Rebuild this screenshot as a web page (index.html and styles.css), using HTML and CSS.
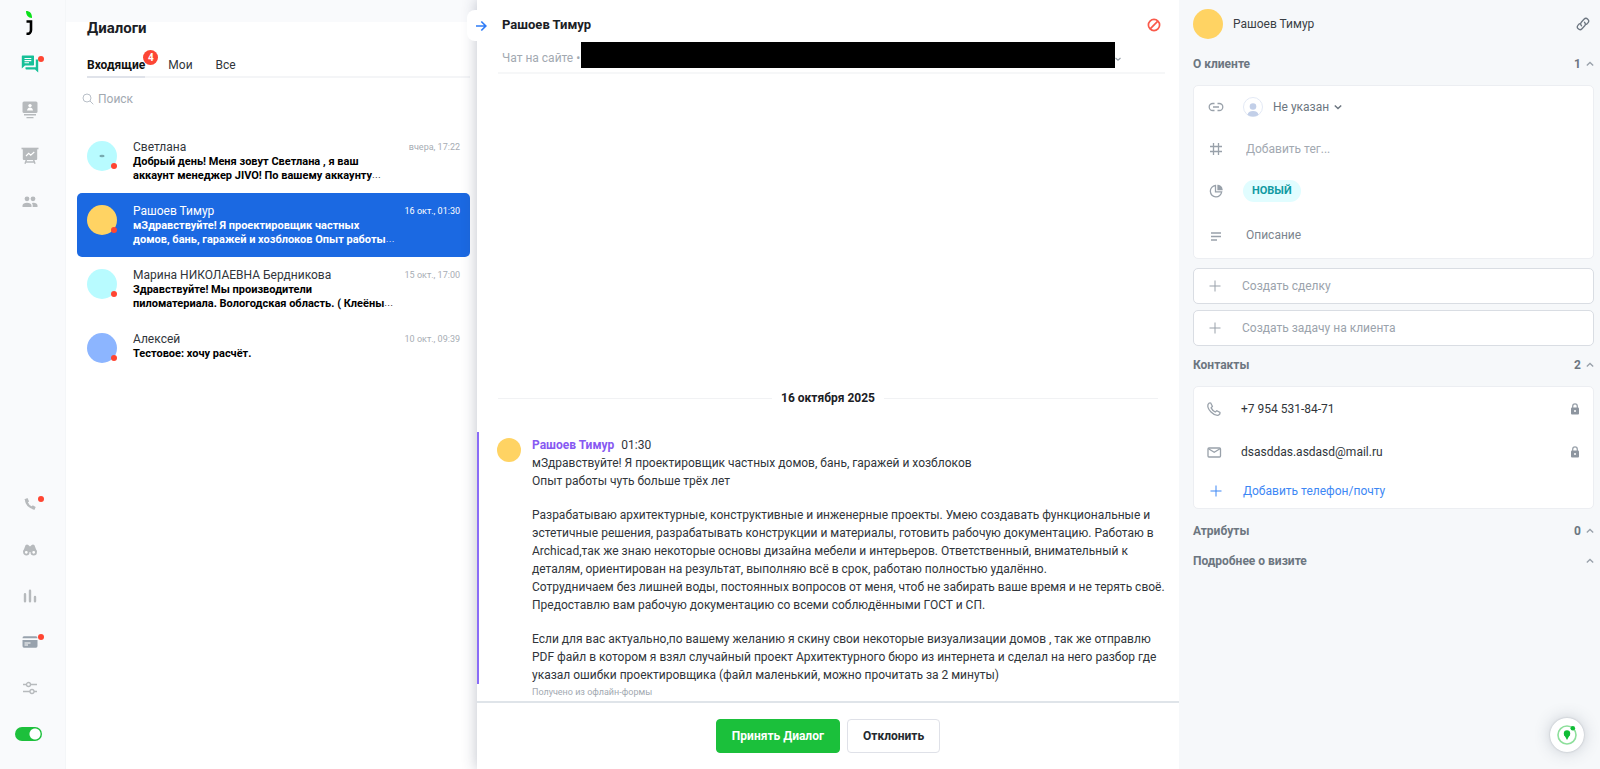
FILE: index.html
```html
<!DOCTYPE html>
<html lang="ru">
<head>
<meta charset="utf-8">
<title>Диалоги</title>
<link rel="stylesheet" href="styles.css">
</head>
<body>
<div class="app">
  <nav class="rail">
    <a class="logo" href="#" aria-label="Jivo"><svg width="12" height="26" viewBox="0 0 12 26"><path d="M2 1c4 0 6 2.500 6 7C4 8 2 5 2 1z" fill="#0be01a"/><path d="M2.500 11.500H7V20q0 4-4.500 3.800" fill="none" stroke="#000" stroke-width="2.600"/></svg></a>
    <div class="rail-group">
      <button class="rail-btn active" aria-label="Диалоги"><svg width="18" height="18" viewBox="0 0 18 18"><path fill="#16c098" d="M1.500.500h10.800q.700 0 .700.700v8.600q0 .700-.700.700H4L.800 13.500V1.200q0-.700.700-.700z"/><path d="M3.500 3.500h6.800M3.500 5.600h6.800M3.500 7.700h4.500" stroke="#fff" stroke-width="1.100"/><path fill="#16c098" d="M14.800 4.500h2.400V17.500L14 14.500H5.200q-.700 0-.700-.700v-1.600h10.300z"/></svg><i class="dot"></i></button>
      <button class="rail-btn" aria-label="Контакты"><svg width="16" height="18" viewBox="0 0 16 18"><rect x=".500" y=".500" width="15" height="11.500" rx="1.500" fill="currentColor"/><circle cx="8" cy="4.600" r="1.700" fill="#fff"/><path d="M5 9.500q.500-3 3-3t3 3z" fill="#fff"/><path d="M2 13.800h12M4.500 16.600h7" stroke="currentColor" stroke-width="1.400"/></svg></button>
      <button class="rail-btn" aria-label="Продажи"><svg width="18" height="18" viewBox="0 0 18 18"><path d="M.500 1.500h17" stroke="currentColor" stroke-width="1.600"/><rect x="1.800" y="1.500" width="14.400" height="11.500" rx="1" fill="currentColor"/><path d="M5 9l2.700-2.600 2 1.800L13.300 5" stroke="#fff" stroke-width="1.200" fill="none"/><path d="M5.500 12.500L4 16.800M12.500 12.500l1.500 4.300M5 15h8" stroke="currentColor" stroke-width="1.400"/></svg></button>
      <button class="rail-btn" aria-label="Команда"><svg width="16" height="12" viewBox="0 0 16 12" fill="currentColor"><circle cx="5" cy="2.800" r="2.400"/><circle cx="11" cy="2.800" r="2.400"/><path d="M.500 11V9.300q.500-2.600 4.500-2.600t4.500 2.600V11zM10.700 11V9.200q0-1.300-.900-2.300 5.200-.700 5.700 2.400V11z"/></svg></button>
    </div>
    <div class="rail-group">
      <button class="rail-btn" aria-label="Звонки"><svg width="14" height="14" viewBox="0 0 14 14"><path d="M3 2.500Q3.500 9.500 11.500 11.500" stroke="currentColor" stroke-width="2.400" fill="none"/><path d="M1.500 2.300L4.500 1l1.600 3.400-2.600 1.500zM8 10.500l1.700-2.300 3 1.700-1.200 2.900z" fill="currentColor"/></svg><i class="dot"></i></button>
      <button class="rail-btn" aria-label="Посетители"><svg width="14" height="12" viewBox="0 0 14 12"><path d="M2.500 1.200q1.300-1.200 2.800-.300L7 2.500 8.700.900q1.500-.900 2.800.300L14 8H0z" fill="currentColor"/><circle cx="3.300" cy="8.300" r="2.300" fill="#fff" stroke="currentColor" stroke-width="1.800"/><circle cx="10.700" cy="8.300" r="2.300" fill="#fff" stroke="currentColor" stroke-width="1.800"/></svg></button>
      <button class="rail-btn" aria-label="Отчёты"><svg width="14" height="14" viewBox="0 0 14 14"><path d="M2 5.200v7M7 1.700v10.500M12 8v4.200" stroke="currentColor" stroke-width="2.400" stroke-linecap="round"/></svg></button>
      <button class="rail-btn dark" aria-label="Оплата"><svg width="16" height="12" viewBox="0 0 16 12"><path d="M.500 2.300Q.500.300 2 .300h12q1.500 0 1.500 2zM.500 4h15v6q0 1.800-1.500 1.800H2Q.500 11.800.500 10z" fill="currentColor"/><path d="M2.500 7h6M2.500 9h3.500" stroke="#fff" stroke-width="1"/></svg><i class="dot"></i></button>
      <button class="rail-btn" aria-label="Настройки"><svg width="16" height="14" viewBox="0 0 16 14" fill="none" stroke="currentColor" stroke-width="1.300"><path d="M1 3.500h3.500M8.500 3.500H15M1 10.500h7M12 10.500h3"/><circle cx="6.500" cy="3.500" r="2"/><circle cx="10" cy="10.500" r="2"/></svg></button>
      <label class="toggle"><input type="checkbox" checked aria-label="В сети"></label>
    </div>
  </nav>

  <section class="inbox">
    <h1 class="inbox-title">Диалоги</h1>
    <div class="tabs">
      <button class="tab current">Входящие<span class="badge">4</span></button>
      <button class="tab">Мои</button>
      <button class="tab">Все</button>
    </div>
    <label class="search"><svg width="12" height="12" viewBox="0 0 12 12" fill="none" stroke="#b9c0c8" stroke-width="1"><circle cx="5" cy="5" r="4"/><path d="M8 8l3.300 3.300"/></svg><input type="text" placeholder="Поиск" aria-label="Поиск"></label>
    <ul class="dialogs">
      <li class="dialog"><span class="avatar cyan"><svg width="6" height="4" viewBox="0 0 6 4"><ellipse cx="3" cy="2" rx="2.600" ry="1.200" fill="#78aab0"/></svg><i class="dot"></i></span>
        <div class="dialog-body"><div class="dialog-head"><span>Светлана</span><time>вчера, 17:22</time></div><p>Добрый день! Меня зовут Светлана , я ваш<br>аккаунт менеджер JIVO! По вашему аккаунту<span class="more">…</span></p></div></li>
      <li class="dialog selected"><span class="avatar yellow"><i class="dot"></i></span>
        <div class="dialog-body"><div class="dialog-head"><span>Рашоев Тимур</span><time>16 окт., 01:30</time></div><p>мЗдравствуйте! Я проектировщик частных<br>домов, бань, гаражей и хозблоков Опыт работы<span class="more">…</span></p></div></li>
      <li class="dialog"><span class="avatar cyan"><i class="dot"></i></span>
        <div class="dialog-body"><div class="dialog-head"><span>Марина НИКОЛАЕВНА Бердникова</span><time>15 окт., 17:00</time></div><p>Здравствуйте! Мы производители<br>пиломатериала. Вологодская область. ( Клеёны<span class="more">…</span></p></div></li>
      <li class="dialog"><span class="avatar blue"><i class="dot"></i></span>
        <div class="dialog-body"><div class="dialog-head"><span>Алексей</span><time>10 окт., 09:39</time></div><p>Тестовое: хочу расчёт.</p></div></li>
    </ul>
  </section>

  <main class="chat">
    <button class="collapse" aria-label="Свернуть"><svg width="12" height="12" viewBox="0 0 12 12" fill="none" stroke="#2f7cf6" stroke-width="1.700"><path d="M1 6h9.500M6.300 1.500L10.800 6l-4.500 4.500"/></svg></button>
    <header class="chat-head">
      <div class="chat-top"><h2>Рашоев Тимур</h2><button class="icon-btn" aria-label="Заблокировать"><svg width="14" height="14" viewBox="0 0 14 14" fill="none" stroke="#fa5a4b" stroke-width="1.700"><circle cx="7" cy="7" r="5.600"/><path d="M3.200 10.800l7.600-7.600"/></svg></button></div>
      <div class="chat-source"><span>Чат на сайте •</span><span class="redacted"></span><svg width="6" height="6" viewBox="0 0 6 6" fill="none" stroke="#98a1ab" stroke-width="1.200"><path d="M.500 2L3 4.300 5.500 2"/></svg></div>
    </header>
    <div class="messages">
      <div class="date">16 октября 2025</div>
      <article class="message">
        <span class="avatar small yellow"></span>
        <div class="message-text">
          <div><b>Рашоев Тимур</b><time>01:30</time></div>
          <p>мЗдравствуйте! Я проектировщик частных домов, бань, гаражей и хозблоков<br>Опыт работы чуть больше трёх лет</p>
          <p>Разрабатываю архитектурные, конструктивные и инженерные проекты. Умею создавать функциональные и<br>эстетичные решения, разрабатывать конструкции и материалы, готовить рабочую документацию. Работаю в<br>Archicad,так же знаю некоторые основы дизайна мебели и интерьеров. Ответственный, внимательный к<br>деталям, ориентирован на результат, выполняю всё в срок, работаю полностью удалённо.<br>Сотрудничаем без лишней воды, постоянных вопросов от меня, чтоб не забирать ваше время и не терять своё.<br>Предоставлю вам рабочую документацию со всеми соблюдёнными ГОСТ и СП.</p>
          <p>Если для вас актуально,по вашему желанию я скину свои некоторые визуализации домов , так же отправлю<br>PDF файл в котором я взял случайный проект Архитектурного бюро из интернета и сделал на него разбор где<br>указал ошибки проектировщика (файл маленький, можно прочитать за 2 минуты)</p>
        </div>
      </article>
      <small class="origin">Получено из офлайн-формы</small>
    </div>
    <footer class="actions"><button class="btn accept">Принять Диалог</button><button class="btn">Отклонить</button></footer>
  </main>

  <aside class="details">
    <header class="client"><span class="avatar yellow"></span><span class="client-name">Рашоев Тимур</span><button class="icon-btn" aria-label="Ссылка"><svg width="14" height="14" viewBox="0 0 14 14" fill="none" stroke-linecap="round"><path d="M5.500 8.700a2.700 2.700 0 0 1 0-3.700L8 2.300a2.600 2.600 0 0 1 3.900 3.600L10.600 7.300M8.500 5.300a2.700 2.700 0 0 1 0 3.700L6 11.700a2.600 2.600 0 0 1-3.900-3.600L3.400 6.700"/></svg></button></header>
    <button class="section"><span>О клиенте</span><span>1</span><svg class="up" width="8" height="6" viewBox="0 0 8 6"><path d="M.800 4.500L4 1.500l3.200 3"/></svg></button>
    <div class="card info">
      <div class="row"><svg width="16" height="16" viewBox="0 0 16 16"><path d="M6.500 4.500H4.700a3.500 3.500 0 0 0 0 7h1.800M9.500 4.500h1.800a3.500 3.500 0 0 1 0 7H9.500M5 8h6"/></svg><button class="agent"><svg class="face" width="20" height="20" viewBox="0 0 20 20"><circle cx="10" cy="10" r="9.500" fill="#fff" stroke="#e3e9f5"/><circle cx="10" cy="9.500" r="3.300" fill="#c2cfe8"/><path d="M4.500 18q.500-4 5.500-4t5.500 4q-5.500 3-11 0z" fill="#c2cfe8"/></svg>Не указан<svg width="8" height="6" viewBox="0 0 8 6"><path d="M.800 1.500L4 4.500l3.200-3"/></svg></button></div>
      <label class="row"><svg width="16" height="16" viewBox="0 0 16 16"><path d="M5.500 2v12M10.500 2v12M2 5.500h12M2 10.500h12"/></svg><input class="field" type="text" placeholder="Добавить тег..." aria-label="Добавить тег"></label>
      <div class="row"><svg width="16" height="16" viewBox="0 0 16 16"><path d="M7.500 2.500a5.700 5.700 0 1 0 6.200 6.300H7.500z"/><path d="M10 2.500v4h4Q13.500 3 10 2.500z" fill="#99a1aa"/></svg><button class="status">НОВЫЙ</button></div>
      <label class="row tall"><svg width="16" height="16" viewBox="0 0 16 16"><path d="M3 6h10M3 9.500h10M3 13h6"/></svg><input class="field strong" type="text" placeholder="Описание" aria-label="Описание"></label>
    </div>
    <button class="create"><svg width="16" height="16" viewBox="0 0 16 16"><path d="M8 2.500v11M2.500 8h11"/></svg>Создать сделку</button>
    <button class="create"><svg width="16" height="16" viewBox="0 0 16 16"><path d="M8 2.500v11M2.500 8h11"/></svg>Создать задачу на клиента</button>
    <button class="section"><span>Контакты</span><span>2</span><svg class="up" width="8" height="6" viewBox="0 0 8 6"><path d="M.800 4.500L4 1.500l3.200 3"/></svg></button>
    <div class="card">
      <div class="row contact"><svg width="16" height="16" viewBox="0 0 16 16"><path d="M2 3.500Q3 1.500 4.700 2l1.700 3.300-1.300 1.600q1.300 2.600 4.100 4.100l1.600-1.300 3.200 1.700q.500 1.700-1.500 2.800Q9 15 5 11T2 3.500z"/></svg><span>+7 954 531-84-71</span><svg class="lock" width="10" height="12" viewBox="0 0 10 12"><path d="M2.700 5V3.200a2.300 2.300 0 0 1 4.600 0V5" fill="none"/><rect x="1" y="4.500" width="8" height="7" rx="1" fill="#8d959f" stroke="none"/><circle cx="5" cy="8" r="1" fill="#fff" stroke="none"/></svg></div>
      <div class="row contact"><svg width="16" height="16" viewBox="0 0 16 16"><rect x="2" y="4" width="12.500" height="9" rx="1"/><path d="M2.500 4.800l5.700 3.400 5.800-3.400"/></svg><span>dsasddas.asdasd@mail.ru</span><svg class="lock" width="10" height="12" viewBox="0 0 10 12"><path d="M2.700 5V3.200a2.300 2.300 0 0 1 4.600 0V5" fill="none"/><rect x="1" y="4.500" width="8" height="7" rx="1" fill="#8d959f" stroke="none"/><circle cx="5" cy="8" r="1" fill="#fff" stroke="none"/></svg></div>
      <button class="row add"><svg width="16" height="16" viewBox="0 0 16 16"><path d="M8 2.500v11M2.500 8h11"/></svg>Добавить телефон/почту</button>
    </div>
    <button class="section"><span>Атрибуты</span><span>0</span><svg class="up" width="8" height="6" viewBox="0 0 8 6"><path d="M.800 4.500L4 1.500l3.200 3"/></svg></button>
    <button class="section"><span>Подробнее о визите</span><svg class="up" width="8" height="6" viewBox="0 0 8 6"><path d="M.800 4.500L4 1.500l3.200 3"/></svg></button>
  </aside>
  <button class="help" aria-label="Помощь"><svg width="22" height="22" viewBox="0 0 22 22"><circle cx="11" cy="11" r="9" fill="none" stroke="#8ddf9b" stroke-width="1.600"/><circle cx="11" cy="9.500" r="3.200" fill="#0fbc35"/><path d="M8.300 11h5.400L11 16z" fill="#0fbc35"/><circle cx="16.800" cy="4.300" r="2.300" fill="#0fbc35"/></svg></button>
</div>
</body>
</html>
```
FILE: styles.css
```css
* { box-sizing: border-box; }
body { margin: 0; font: 12px/18px Roboto, "Liberation Sans", sans-serif; color: #30353a; background: #fff; }
button, input { font: inherit; color: inherit; background: none; border: 0; padding: 0; margin: 0; text-align: left; }
button { cursor: pointer; }
h1, h2, p, ul { margin: 0; padding: 0; }
svg { flex: none; display: block; }
.app { display: grid; grid-template-columns: 66px 411px minmax(0, 1fr) 421px; height: 100vh; }

.rail { background: #f9fafc; border-right: 1px solid #f4f6f8; display: flex; flex-direction: column; align-items: flex-start; padding: 10px 0 12px 7px; }
.logo { width: 46px; display: flex; justify-content: center; }
.rail-group { display: flex; flex-direction: column; color: #b7babd; padding-top: 5px; }
.rail-group + .rail-group { margin-top: auto; }
.rail-btn { position: relative; width: 46px; height: 46px; display: flex; align-items: center; justify-content: center; }
.dark { color: #98a2ad; }
.dot { position: absolute; width: 6px; height: 6px; border-radius: 50%; background: #ff4532; right: 9px; top: 15px; }
.toggle { height: 46px; display: flex; align-items: center; padding-left: 8px; }
.toggle input { appearance: none; width: 27px; height: 14px; border-radius: 7px; background: radial-gradient(circle at 20px 7px, #fff 5px, #1dc03c 6px); }

.inbox { background: linear-gradient(#f9fafc 22px, #fff 22px); padding: 18px 7px 0 11px; }
.inbox-title { font-size: 15px; line-height: 20px; font-weight: 700; color: #1b2025; margin-left: 10px; }
.tabs { display: flex; gap: 23px; margin: 16px 0 0 10px; height: 24px; border-bottom: 2px solid #f4f5f7; }
.tab { position: relative; height: 24px; border-bottom: 2px solid transparent; }
.current { font-weight: 700; color: #111; border-color: #e0e3ea; }
.badge { position: absolute; right: -13px; top: -4px; width: 15px; height: 15px; border-radius: 50%; background: #fc4635; color: #fff; font-size: 10px; line-height: 15px; text-align: center; }
.search { display: flex; align-items: center; gap: 4px; margin: 10px 0 0 5px; height: 22px; }
.search input { flex: 1; min-width: 0; outline: 0; }
input::placeholder { color: #a2a9b1; opacity: 1; }
.dialogs { list-style: none; margin-top: 19px; }
.dialog { display: flex; gap: 16px; height: 64px; padding: 12px 10px 0; border-radius: 5px; }
.avatar { position: relative; flex: none; width: 30px; height: 30px; border-radius: 50%; display: flex; align-items: center; justify-content: center; }
.avatar .dot { right: 0; top: 22px; }
.cyan { background: #b8fbff; }
.yellow { background: #ffd363; }
.blue { background: #8cb5ff; }
.dialog-body { flex: 1; min-width: 0; margin-top: -1px; line-height: 14px; }
.dialog-head { display: flex; justify-content: space-between; line-height: 15px; }
.dialog-head time { font-size: 9px; color: #a7adb4; }
.dialog p { color: #000; font-size: 11px; font-weight: 700; }
.more { font: 8px/8px "Noto Sans CJK SC", sans-serif; opacity: .8; vertical-align: 1px; }
.selected { background: #1b69e2; }
.selected .dialog-head, .selected time, .selected p { color: #fff; }

.chat { position: relative; background: #fff; display: flex; flex-direction: column; min-width: 0; min-height: 0; box-shadow: 0 0 14px rgba(40, 50, 80, .3); clip-path: inset(0 0 0 -30px); }
.collapse { position: absolute; left: -10px; top: 10px; width: 24px; height: 31px; border-radius: 8px; background: #fff; display: flex; align-items: center; justify-content: flex-end; padding-right: 4px; }
.chat-head { margin: 0 14px 0 21px; padding: 15px 4px 4px; border-bottom: 2px solid #f6f7f8; }
.chat-top { display: flex; justify-content: space-between; align-items: center; height: 20px; }
.chat-top h2 { font-size: 14px; font-weight: 600; color: #1b2025; }
.chat-top h2 { font-size: 13px; font-weight: 700; }
.chat-source { display: flex; align-items: center; margin-top: 7px; color: #a2a9b1; }
.chat-source > span:first-child { width: 79px; padding-top: 6px; white-space: nowrap; }
.chat-source svg { margin-top: 8px; }
.redacted { flex: 0 1 534px; height: 26px; background: #000; }
.messages { flex: 1; min-height: 0; display: flex; flex-direction: column; justify-content: flex-end; }
.date { display: flex; align-items: center; gap: 9px; margin: 0 21px 25px; font-weight: 700; color: #1b2025; }
.date::before, .date::after { content: ""; flex: 1; height: 1px; background: #f1f2f4; }
.message { display: flex; gap: 11px; padding: 4px 0 0 18px; border-left: 2px solid #8a6cf7; white-space: nowrap; }
.small { width: 24px; height: 24px; margin-top: 2px; }
.message b { color: #8759f2; margin-right: 7px; }
.message p + p { margin-top: 16px; }
.origin { margin: 0 0 0 55px; font-size: 9px; line-height: 17px; color: #a2a9b1; }
.actions { border-top: 2px solid #dfe4e9; display: flex; justify-content: center; gap: 7px; padding: 16px 0; height: 68px; }
.btn { height: 34px; padding: 0 15px; border: 1px solid #dfe1e8; border-radius: 4px; font-weight: 700; color: #24292e; }
.accept { background: #1bc03b; color: #fff; border-color: #1bc03b; }

.details { background: #f6f8fa; padding: 9px 6px 0 14px; color: #6c7680; }
.client { display: flex; align-items: center; gap: 10px; height: 30px; color: #3a3f45; padding-right: 4px; margin-bottom: 14px; }
.client-name { flex: 1; }
.section { display: flex; align-items: center; width: 100%; height: 22px; font-weight: 700; margin-bottom: 10px; gap: 5px; }
.section span:first-child { flex: 1; }
.details svg { fill: none; stroke: #99a1aa; stroke-width: 1.300; }
.details .icon-btn svg { stroke: #6c7680; }
.details .create svg, .details .add svg { stroke-width: 1; }
.details .face { stroke: none; stroke-width: 1; }
.card { background: #fff; border: 1px solid #eceef2; border-radius: 5px; margin-bottom: 9px; }
.row { display: flex; align-items: center; gap: 19px; height: 42px; padding: 0 13px 0 14px; width: 100%; }
.tall { height: 46px; }
.agent { display: flex; align-items: center; gap: 10px; }
.agent svg:last-child { margin-left: -5px; stroke: #6c7680; stroke-width: 1.500; }
.field { flex: 1; min-width: 0; padding-left: 3px; outline: 0; }
.strong::placeholder { color: #7c858e; }
.status { background: #e1fdff; color: #109aa2; font-size: 11px; font-weight: 700; border-radius: 11px; height: 22px; padding: 0 9px; }
.create { display: flex; align-items: center; gap: 19px; width: 100%; height: 36px; padding: 0 13px; background: #fff; border: 1px solid #d9dde3; border-radius: 5px; color: #9ba3ac; margin-bottom: 6px; }
.create + .section { margin-top: 8px; }
.contact { height: 43px; padding-left: 12px; }
.contact span { flex: 1; color: #30353a; }
.add { height: 35px; color: #3d87f5; }
.details .add svg { stroke: #3d87f5; }
.card + .section { margin: 11px 0 8px; }
.help { position: fixed; right: 16px; bottom: 17px; width: 34px; height: 34px; border-radius: 50%; background: #fff; display: flex; align-items: center; justify-content: center; box-shadow: 0 0 16px rgba(60, 70, 90, .25), 0 0 2px rgba(60, 70, 90, .3); }
```
